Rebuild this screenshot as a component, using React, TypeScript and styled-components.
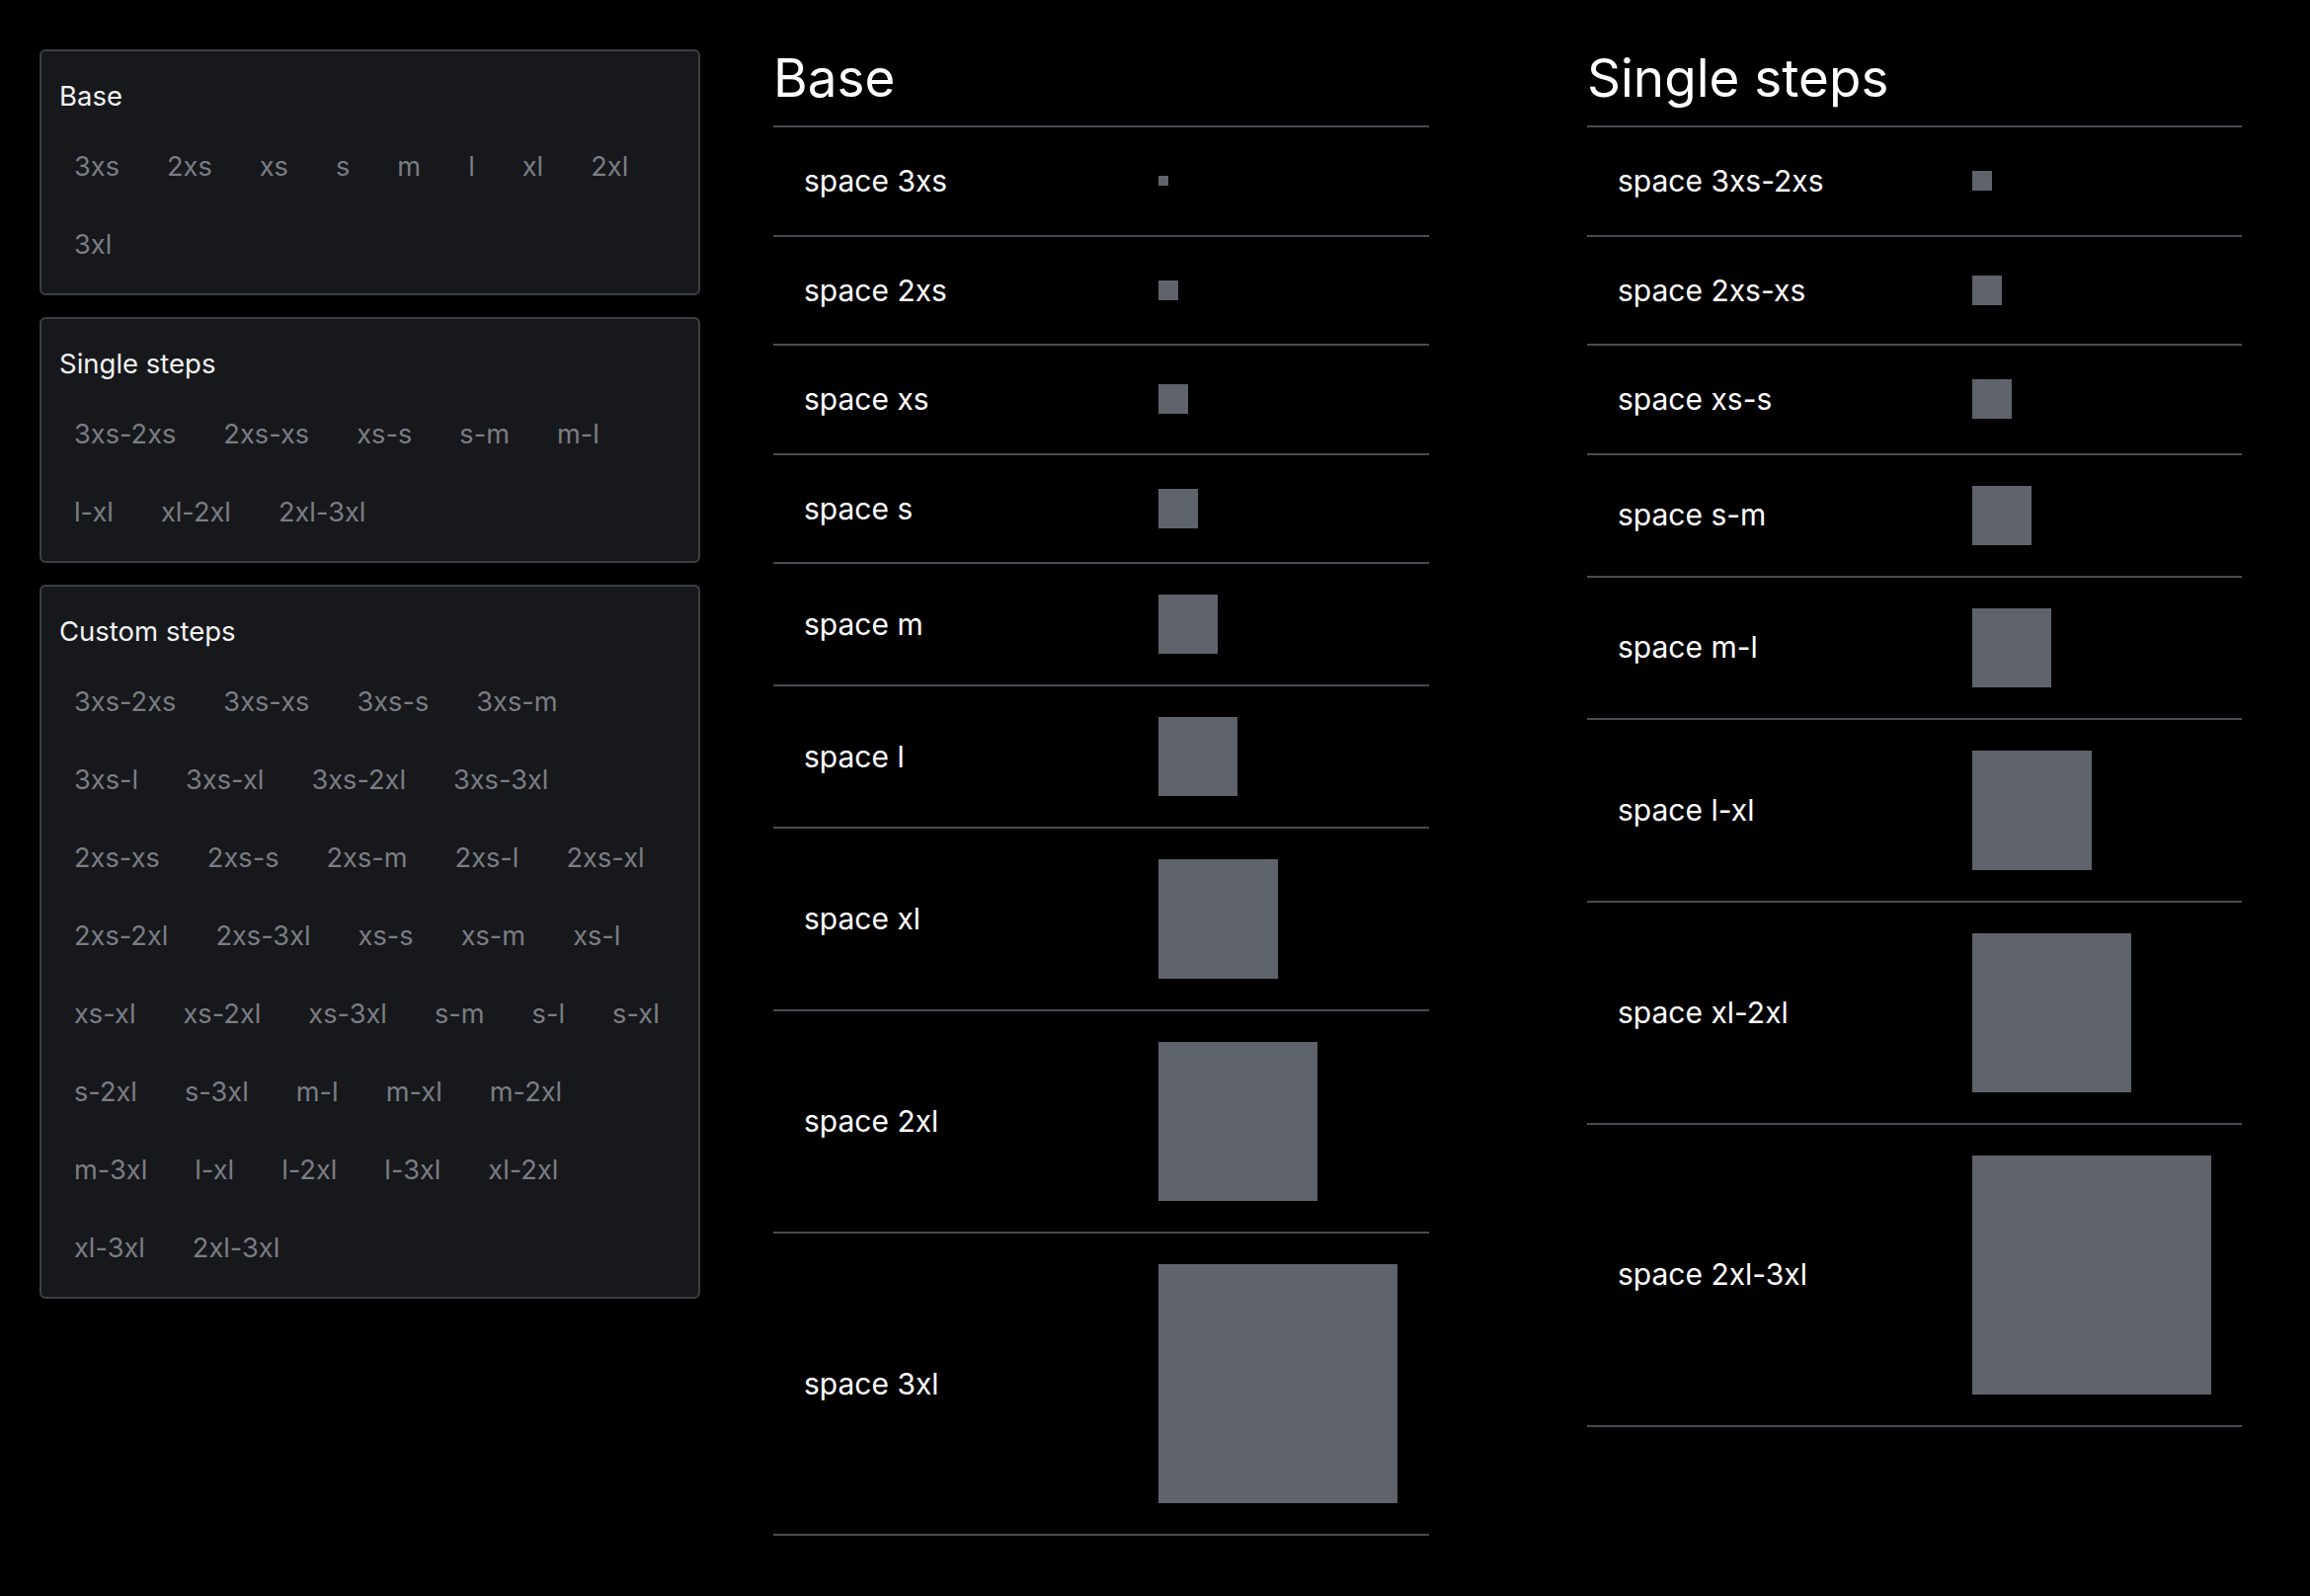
import React from "react";
import styled, { createGlobalStyle } from "styled-components";

const GlobalStyle = createGlobalStyle`
  html, body {
    margin: 0;
    padding: 0;
    background: #000;
  }
  body {
    font-family: Inter, "Noto Sans", sans-serif;
    color: #fff;
    -webkit-font-smoothing: antialiased;
  }
`;

const Page = styled.div`
  display: flex;
  align-items: flex-start;
  box-sizing: border-box;
  min-height: 1616px;
  padding: 50px 40px 60px;
`;

const Sidebar = styled.nav`
  flex: none;
  width: 669px;
  display: flex;
  flex-direction: column;
  gap: 22px;
`;

const Card = styled.section`
  box-sizing: border-box;
  display: flex;
  flex-direction: column;
  gap: 18px;
  padding: 21px 18px 20px;
  background: #17181c;
  border: 2px solid #3d3f44;
  border-radius: 6px;
`;

const CardTitle = styled.h3`
  margin: 0;
  font-size: 27.5px;
  line-height: 48px;
  font-weight: 400;
  color: #f2f2f3;
`;

const LinkList = styled.ul`
  list-style: none;
  margin: 0 0 0 1px;
  padding: 0;
  display: flex;
  flex-wrap: wrap;
  gap: 20px;
`;

const StepLink = styled.a`
  display: block;
  padding: 7px 14px;
  font-size: 27.2px;
  line-height: 45px;
  color: #7a7d84;
  text-decoration: none;
`;

const Main = styled.main`
  margin-left: 74px;
  display: grid;
  grid-template-columns: 664px 663px;
  column-gap: 160px;
  align-items: start;
`;

const Table = styled.section`
  display: flex;
  flex-direction: column;
`;

const Heading = styled.h2`
  margin: 0 0 18px;
  font-size: 53px;
  line-height: 59px;
  font-weight: 400;
  color: #fff;
`;

const Row = styled.div`
  display: grid;
  grid-template-columns: 359px 1fr;
  align-items: center;
  padding: 31px 31px;
  border-top: 2px solid #4a4c51;
  &:last-child {
    border-bottom: 2px solid #4a4c51;
  }
`;

const RowLabel = styled.span`
  font-size: 30px;
  line-height: 46.5px;
  color: #fff;
`;

const Swatch = styled.div<{ $size: number }>`
  width: ${(p) => p.$size}px;
  height: ${(p) => p.$size}px;
  background: #5f636b;
`;

const sizes: Record<string, number> = {
  "3xs": 10,
  "2xs": 20,
  xs: 30,
  s: 40,
  m: 60,
  l: 80,
  xl: 121,
  "2xl": 161,
  "3xl": 242,
};

const baseSteps = ["3xs", "2xs", "xs", "s", "m", "l", "xl", "2xl", "3xl"];
const singleSteps = baseSteps.slice(0, -1).map((s, i) => `${s}-${baseSteps[i + 1]}`);
const customSteps: string[] = [];
baseSteps.forEach((a, i) => {
  baseSteps.slice(i + 1).forEach((b) => {
    customSteps.push(`${a}-${b}`);
  });
});

const groups = [
  { title: "Base", items: baseSteps },
  { title: "Single steps", items: singleSteps },
  { title: "Custom steps", items: customSteps },
];

const pairSize = (name: string) => {
  const parts = name.split("-");
  return sizes[parts[parts.length - 1]];
};

export default function App() {
  return (
    <>
      <GlobalStyle />
      <Page>
        <Sidebar>
          {groups.map((g) => (
            <Card key={g.title}>
              <CardTitle>{g.title}</CardTitle>
              <LinkList>
                {g.items.map((it) => (
                  <li key={it}>
                    <StepLink href={`#space-${it}`}>{it}</StepLink>
                  </li>
                ))}
              </LinkList>
            </Card>
          ))}
        </Sidebar>
        <Main>
          <Table>
            <Heading>Base</Heading>
            {baseSteps.map((s) => (
              <Row key={s} id={`space-${s}`}>
                <RowLabel>space {s}</RowLabel>
                <Swatch $size={sizes[s]} />
              </Row>
            ))}
          </Table>
          <Table>
            <Heading>Single steps</Heading>
            {singleSteps.map((s) => (
              <Row key={s} id={`space-${s}`}>
                <RowLabel>space {s}</RowLabel>
                <Swatch $size={pairSize(s)} />
              </Row>
            ))}
          </Table>
        </Main>
      </Page>
    </>
  );
}
